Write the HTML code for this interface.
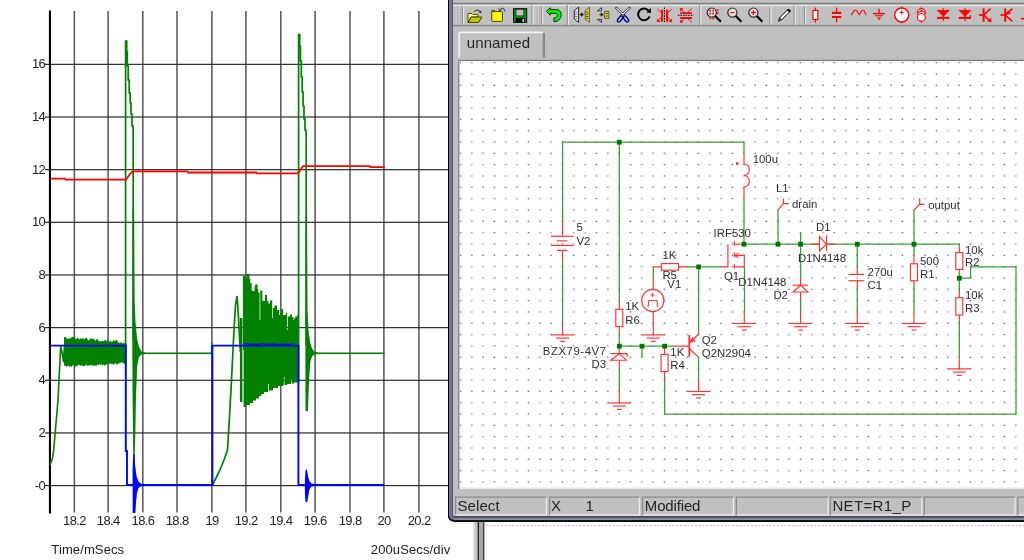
<!DOCTYPE html>
<html><head><meta charset="utf-8"><title>sim</title>
<style>
html,body{margin:0;padding:0;background:#fff;}
body{width:1024px;height:560px;overflow:hidden;font-family:"Liberation Sans",sans-serif;}
svg{display:block;position:absolute;left:0;top:0;will-change:transform;opacity:0.999;}
text{font-family:"Liberation Sans",sans-serif;}
.pl{font-size:13px;fill:#222;letter-spacing:-0.6px;}
.pt{font-size:13px;fill:#222;letter-spacing:0.12px;}
.sc{font-size:11.4px;fill:#2e2e2e;}
.ui{font-size:15px;fill:#262626;letter-spacing:0.18px;}
</style></head><body>
<svg width="1024" height="560" viewBox="0 0 1024 560">
<defs>
<pattern id="dots" x="454.733" y="56.933" width="34" height="34" patternUnits="userSpaceOnUse">
<rect x="5.02" y="5.02" width="1.3" height="1.3" fill="#555"/>
<rect x="5.02" y="16.35" width="1.3" height="1.3" fill="#555"/>
<rect x="5.14" y="27.81" width="1.05" height="1.05" fill="#000"/>
<rect x="16.25" y="4.92" width="1.5" height="1.5" fill="#999"/>
<rect x="16.25" y="16.25" width="1.5" height="1.5" fill="#999"/>
<rect x="16.35" y="27.68" width="1.3" height="1.3" fill="#555"/>
<rect x="27.58" y="4.92" width="1.5" height="1.5" fill="#999"/>
<rect x="27.58" y="16.25" width="1.5" height="1.5" fill="#999"/>
<rect x="27.68" y="27.68" width="1.3" height="1.3" fill="#555"/>
</pattern>
</defs>
<rect x="0" y="0" width="1024" height="560" fill="#fff"/>
<g id="plot">
<rect x="73.60" y="11" width="1.5" height="501.5" fill="#555"/>
<rect x="107.35" y="11" width="1.5" height="501.5" fill="#555"/>
<rect x="142.05" y="11" width="1.5" height="501.5" fill="#555"/>
<rect x="176.25" y="11" width="1.5" height="501.5" fill="#555"/>
<rect x="211.15" y="11" width="1.5" height="501.5" fill="#555"/>
<rect x="245.15" y="11" width="1.5" height="501.5" fill="#555"/>
<rect x="280.05" y="11" width="1.5" height="501.5" fill="#555"/>
<rect x="314.35" y="11" width="1.5" height="501.5" fill="#555"/>
<rect x="349.25" y="11" width="1.5" height="501.5" fill="#555"/>
<rect x="383.15" y="11" width="1.5" height="501.5" fill="#555"/>
<rect x="418.15" y="11" width="1.5" height="501.5" fill="#555"/>
<rect x="45" y="63.75" width="403" height="1.2" fill="#2c2c2c"/>
<rect x="45" y="116.41" width="403" height="1.2" fill="#2c2c2c"/>
<rect x="45" y="169.06" width="403" height="1.2" fill="#2c2c2c"/>
<rect x="45" y="221.72" width="403" height="1.2" fill="#2c2c2c"/>
<rect x="45" y="274.37" width="403" height="1.2" fill="#2c2c2c"/>
<rect x="45" y="327.03" width="403" height="1.2" fill="#2c2c2c"/>
<rect x="45" y="379.69" width="403" height="1.2" fill="#2c2c2c"/>
<rect x="45" y="432.34" width="403" height="1.2" fill="#2c2c2c"/>
<rect x="45" y="485.00" width="403" height="1.2" fill="#2c2c2c"/>
<rect x="48.9" y="10.5" width="2.1" height="503" fill="#000"/>
<text x="45.2" y="68.3" text-anchor="end" class="pl">16</text>
<text x="45.2" y="121.0" text-anchor="end" class="pl">14</text>
<text x="45.2" y="173.6" text-anchor="end" class="pl">12</text>
<text x="45.2" y="226.3" text-anchor="end" class="pl">10</text>
<text x="45.2" y="278.9" text-anchor="end" class="pl">8</text>
<text x="45.2" y="331.6" text-anchor="end" class="pl">6</text>
<text x="45.2" y="384.2" text-anchor="end" class="pl">4</text>
<text x="45.2" y="436.9" text-anchor="end" class="pl">2</text>
<text x="45.2" y="489.5" text-anchor="end" class="pl">-0</text>
<text x="74.5" y="525.1" text-anchor="middle" class="pl">18.2</text>
<text x="108.3" y="525.1" text-anchor="middle" class="pl">18.4</text>
<text x="143.0" y="525.1" text-anchor="middle" class="pl">18.6</text>
<text x="177.2" y="525.1" text-anchor="middle" class="pl">18.8</text>
<text x="212.1" y="525.1" text-anchor="middle" class="pl">19</text>
<text x="246.1" y="525.1" text-anchor="middle" class="pl">19.2</text>
<text x="281.0" y="525.1" text-anchor="middle" class="pl">19.4</text>
<text x="315.3" y="525.1" text-anchor="middle" class="pl">19.6</text>
<text x="350.2" y="525.1" text-anchor="middle" class="pl">19.8</text>
<text x="384.1" y="525.1" text-anchor="middle" class="pl">20</text>
<text x="419.1" y="525.1" text-anchor="middle" class="pl">20.2</text>
<text x="51.3" y="554" class="pt">Time/mSecs</text>
<text x="450.3" y="554" text-anchor="end" class="pt">200uSecs/div</text>
<polyline fill="none" stroke="#008000" stroke-width="1.6" points="50,465 52.5,458 53.5,452 58,400 60.7,346 62,352 63.5,362 64.5,345"/>
<polygon fill="#008000" points="64.0,337.6 64.9,336.7 65.8,337.1 66.7,338.6 67.6,338.8 68.5,338.8 69.4,337.8 70.3,338.7 71.2,337.3 72.1,337.5 73.0,336.4 73.9,336.8 74.8,339.0 75.7,338.6 76.6,339.1 77.5,337.8 78.4,338.1 79.3,339.7 80.2,337.9 81.1,339.0 82.0,338.7 82.9,337.8 83.8,339.5 84.7,338.7 85.6,338.2 86.5,337.5 87.4,339.2 88.3,340.1 89.2,340.5 90.1,338.4 91.0,338.2 91.9,338.8 92.8,339.2 93.7,338.5 94.6,339.7 95.5,341.0 96.4,339.3 97.3,338.8 98.2,340.2 99.1,341.4 100.0,341.0 100.9,341.4 101.8,341.3 102.7,340.6 103.6,341.6 104.5,340.2 105.4,339.5 106.3,341.2 107.2,341.0 108.1,339.3 109.0,341.7 109.9,341.6 110.8,340.6 111.7,342.5 112.6,341.4 113.5,339.8 114.4,341.2 115.3,340.7 116.2,340.1 117.1,340.3 118.0,341.8 118.9,342.8 119.8,342.9 120.7,342.6 121.6,342.3 122.5,343.4 123.4,343.1 124.3,343.4 125.2,341.7 125.2,362.4 124.3,364.3 123.4,363.1 122.5,362.6 121.6,362.4 120.7,362.7 119.8,362.5 118.9,364.0 118.0,363.5 117.1,364.5 116.2,364.5 115.3,362.7 114.4,364.2 113.5,364.5 112.6,364.2 111.7,363.9 110.8,363.5 109.9,364.1 109.0,363.5 108.1,363.4 107.2,365.3 106.3,364.1 105.4,365.4 104.5,365.5 103.6,364.4 102.7,365.5 101.8,364.0 100.9,365.4 100.0,363.7 99.1,364.7 98.2,365.2 97.3,364.3 96.4,366.2 95.5,365.5 94.6,365.4 93.7,366.2 92.8,365.0 91.9,365.4 91.0,364.7 90.1,365.4 89.2,365.7 88.3,365.3 87.4,366.1 86.5,364.5 85.6,365.0 84.7,366.5 83.8,365.8 82.9,366.2 82.0,365.2 81.1,366.0 80.2,365.6 79.3,365.1 78.4,364.8 77.5,365.6 76.6,366.2 75.7,366.9 74.8,365.1 73.9,365.6 73.0,365.0 72.1,366.0 71.2,367.5 70.3,365.6 69.4,367.3 68.5,365.4 67.6,366.3 66.7,366.6 65.8,366.3 64.9,365.5 64.0,365.8"/>
<polyline fill="none" stroke="#008000" stroke-width="1.7" points="125.6,364 125.6,41 126.7,41 126.7,52 127.3,52 127.3,66 128.2,66 128.2,80 129.2,80 129.2,93 130.2,93 130.2,103 131,103 131,114 132,114 132,126 133,126 133.2,131 133.2,340"/>
<polygon fill="#008000" points="132.6,210 134.1,210 134.6,300 135.5,322 137,338 139,347 141.5,351.5 145,352.6 145,354 141.5,354.6 139,357 137.2,366 136,395 135.4,430 134.6,463 133.4,463 132.6,400 132.3,340"/>
<rect x="144" y="352.5" width="68.5" height="1.6" fill="#008000"/>
<polyline fill="none" stroke="#008000" stroke-width="1.5" points="211.5,353 211.8,343.5 212.6,343.5"/>
<polyline fill="none" stroke="#008000" stroke-width="1.7" points="212.5,485 216,478 220,470 224,460 227.5,450 229,425 231,390 233.5,340 235.5,305 237,296 238.2,312 239.4,335 240.4,352"/>
<polygon fill="#008000" points="242.9,276.0 245.0,276.0 245.0,275.5 246.2,275.5 246.2,278.5 246.9,278.5 246.9,274.0 249.5,274.0 249.5,279.0 250.2,279.0 250.2,283.0 251.6,283.0 251.6,290.5 252.2,290.5 252.2,291.0 254.6,291.0 254.6,286.5 255.2,286.5 255.2,284.5 257.6,284.5 257.6,289.0 258.2,289.0 258.2,292.5 259.6,292.5 259.6,320.0 260.3,320.0 260.3,290.5 262.4,290.5 262.4,301.0 265.0,301.0 265.0,295.0 267.0,295.0 267.0,301.0 268.4,301.0 268.4,303.5 270.0,303.5 270.0,300.5 272.2,300.5 272.2,318.0 272.9,318.0 272.9,308.0 274.5,308.0 274.5,305.5 277.0,305.5 277.0,310.0 279.2,310.0 279.2,315.0 280.2,315.0 280.2,313.0 281.0,313.0 281.0,309.0 283.0,309.0 283.0,315.0 286.0,315.0 286.0,313.0 287.2,313.0 287.2,330.0 287.9,330.0 287.9,316.5 290.0,316.5 290.0,314.5 292.0,314.5 292.0,317.0 293.4,317.0 293.4,320.0 294.2,320.0 294.2,318.0 295.4,318.0 295.4,316.5 297.2,316.5 297.2,315.0 298.8,315.0 298.8,382.5 294.0,382.5 294.0,383.5 291.8,383.5 291.8,379.0 291.2,379.0 291.2,384.0 287.0,384.0 287.0,385.0 284.5,385.0 284.5,377.0 283.9,377.0 283.9,385.0 283.0,385.0 283.0,386.0 278.0,386.0 278.0,388.0 273.0,388.0 273.0,390.5 268.9,390.5 268.9,384.0 268.2,384.0 268.2,392.0 264.0,392.0 264.0,394.0 261.4,394.0 261.4,396.0 259.0,396.0 259.0,398.5 256.0,398.5 256.0,400.5 253.0,400.5 253.0,403.0 250.0,403.0 250.0,405.0 246.0,405.0 246.0,407.0 243.6,407.0 243.6,350.0 242.9,350.0"/>
<rect x="239.9" y="318" width="2.5" height="84" fill="#008000"/>
<polyline fill="none" stroke="#008000" stroke-width="1.7" points="298.6,382 298.6,34.5 299.7,34.5 299.7,46 300.4,46 300.4,61 301.3,61 301.3,77 302.2,77 302.2,92 303.1,92 303.1,106 304,106 304,119 305,119 305,130 306,130 306.2,136 306.2,345"/>
<polygon fill="#008000" points="305.6,215 307,215 307.5,310 308.5,330 310,342 312,348.5 314.5,351.8 318,352.6 318,354 314.5,354.4 312,356.5 310.3,362 309.2,378 308.4,398 307.9,411 305.5,411 305.4,360"/>
<rect x="317" y="352.5" width="67.5" height="1.6" fill="#008000"/>
<polyline fill="none" stroke="#ff0000" stroke-width="1.8" points="50,178.6 65,178.6 65.5,179.7 126,179.7 130,174 132.8,171.4 187.5,171.4 188,172.5 256,172.5 256.5,173.3 298,173.3 300,170.5 303,166.2 370,166.2 370.5,167.2 385,167.2"/>
<polyline fill="none" stroke="#0000ff" stroke-width="1.9" points="50,345.6 125.8,345.6 125.8,451 127,451 127,485 212.4,485 212.4,345.6 298.4,345.6 298.4,485 384.5,485"/>
<polygon fill="#0000ff" points="132.6,470 133.2,454 134.4,454 135.2,466 136.5,476 138.5,481.5 141,483.8 144.5,484.3 144.5,485.8 141,486.2 138.5,488 137,493 136,502 135.4,513 132.7,513"/>
<polygon fill="#0000ff" points="304.9,480 305.6,470 307,469.6 308,476 309.4,481 311.5,483.6 315.5,484.3 315.5,485.8 311.5,486.4 309.6,489 308.4,495 307.3,502 305.5,502 304.9,492"/>
<polyline fill="none" stroke="#0000ff" stroke-width="1" points="243,344.3 247,343.6 250,344.4 254,343.8 258,344.4 262,343.7 267,344.4 272,343.8 277,344.4 283,343.9 288,344.4 294,344"/>
<rect x="211.5" y="342" width="1.8" height="4" fill="#008000" opacity="0"/>
</g>
<g id="chrome">
<rect x="473" y="520" width="5" height="40" fill="#c6c6c6"/>
<rect x="473" y="520" width="1.5" height="40" fill="#e4e4e4"/>
<rect x="477.7" y="520" width="1.2" height="40" fill="#000"/>
<rect x="478.9" y="520" width="4.3" height="40" fill="#a8a8a8"/>
<rect x="483" y="520" width="1.4" height="40" fill="#404040"/>
<line x1="486" y1="525.5" x2="1024" y2="525.5" stroke="#bcbcbc" stroke-width="1" stroke-dasharray="2,1.73"/>
<rect x="448" y="-20" width="600" height="541.7" rx="5.5" ry="5.5" fill="#000"/>
<rect x="449" y="-20" width="600" height="539.8" rx="4.5" ry="4.5" fill="#72749c"/>
<rect x="452" y="-20" width="600" height="537" fill="#50505c"/>
<rect x="453" y="-20" width="600" height="536" fill="#c0c0c0"/>
<rect x="454" y="516.1" width="600" height="2.1" fill="#52525c"/>
<rect x="454" y="518.1" width="600" height="2.4" fill="#8486aa"/>
<rect x="454" y="520.3" width="600" height="1.5" fill="#000"/>
<rect x="453" y="2.8" width="600" height="1.6" fill="#808080"/>
<rect x="453" y="4.7" width="600" height="1.4" fill="#e4e4e4"/>
<rect x="453" y="24.8" width="600" height="1.6" fill="#8c8c8c"/>
<rect x="455.9" y="8.0" width="1.3" height="1.1" fill="#dedede"/><rect x="456.7" y="8.9" width="1.3" height="1.0" fill="#a2a2a2"/><rect x="458.7" y="8.6" width="1.3" height="1.1" fill="#dedede"/><rect x="459.5" y="9.5" width="1.3" height="1.0" fill="#a2a2a2"/><rect x="455.9" y="10.6" width="1.3" height="1.1" fill="#dedede"/><rect x="456.7" y="11.5" width="1.3" height="1.0" fill="#a2a2a2"/><rect x="458.7" y="11.2" width="1.3" height="1.1" fill="#dedede"/><rect x="459.5" y="12.1" width="1.3" height="1.0" fill="#a2a2a2"/><rect x="455.9" y="13.1" width="1.3" height="1.1" fill="#dedede"/><rect x="456.7" y="14.0" width="1.3" height="1.0" fill="#a2a2a2"/><rect x="458.7" y="13.7" width="1.3" height="1.1" fill="#dedede"/><rect x="459.5" y="14.6" width="1.3" height="1.0" fill="#a2a2a2"/><rect x="455.9" y="15.6" width="1.3" height="1.1" fill="#dedede"/><rect x="456.7" y="16.5" width="1.3" height="1.0" fill="#a2a2a2"/><rect x="458.7" y="16.2" width="1.3" height="1.1" fill="#dedede"/><rect x="459.5" y="17.1" width="1.3" height="1.0" fill="#a2a2a2"/><rect x="455.9" y="18.2" width="1.3" height="1.1" fill="#dedede"/><rect x="456.7" y="19.1" width="1.3" height="1.0" fill="#a2a2a2"/><rect x="458.7" y="18.8" width="1.3" height="1.1" fill="#dedede"/><rect x="459.5" y="19.7" width="1.3" height="1.0" fill="#a2a2a2"/><rect x="455.9" y="20.8" width="1.3" height="1.1" fill="#dedede"/><rect x="456.7" y="21.6" width="1.3" height="1.0" fill="#a2a2a2"/><rect x="458.7" y="21.4" width="1.3" height="1.1" fill="#dedede"/><rect x="459.5" y="22.2" width="1.3" height="1.0" fill="#a2a2a2"/>
<rect x="462" y="6.5" width="1.1" height="17.5" fill="#8c8c8c"/><rect x="463.1" y="6.5" width="1.1" height="17.5" fill="#ececec"/>
<rect x="531.6" y="5" width="1.1" height="20" fill="#8c8c8c"/><rect x="532.7" y="5" width="1.1" height="20" fill="#ececec"/>
<rect x="535.4" y="8.0" width="1.3" height="1.1" fill="#dedede"/><rect x="536.2" y="8.9" width="1.3" height="1.0" fill="#a2a2a2"/><rect x="538.2" y="8.6" width="1.3" height="1.1" fill="#dedede"/><rect x="539" y="9.5" width="1.3" height="1.0" fill="#a2a2a2"/><rect x="535.4" y="10.6" width="1.3" height="1.1" fill="#dedede"/><rect x="536.2" y="11.5" width="1.3" height="1.0" fill="#a2a2a2"/><rect x="538.2" y="11.2" width="1.3" height="1.1" fill="#dedede"/><rect x="539" y="12.1" width="1.3" height="1.0" fill="#a2a2a2"/><rect x="535.4" y="13.1" width="1.3" height="1.1" fill="#dedede"/><rect x="536.2" y="14.0" width="1.3" height="1.0" fill="#a2a2a2"/><rect x="538.2" y="13.7" width="1.3" height="1.1" fill="#dedede"/><rect x="539" y="14.6" width="1.3" height="1.0" fill="#a2a2a2"/><rect x="535.4" y="15.6" width="1.3" height="1.1" fill="#dedede"/><rect x="536.2" y="16.5" width="1.3" height="1.0" fill="#a2a2a2"/><rect x="538.2" y="16.2" width="1.3" height="1.1" fill="#dedede"/><rect x="539" y="17.1" width="1.3" height="1.0" fill="#a2a2a2"/><rect x="535.4" y="18.2" width="1.3" height="1.1" fill="#dedede"/><rect x="536.2" y="19.1" width="1.3" height="1.0" fill="#a2a2a2"/><rect x="538.2" y="18.8" width="1.3" height="1.1" fill="#dedede"/><rect x="539" y="19.7" width="1.3" height="1.0" fill="#a2a2a2"/><rect x="535.4" y="20.8" width="1.3" height="1.1" fill="#dedede"/><rect x="536.2" y="21.6" width="1.3" height="1.0" fill="#a2a2a2"/><rect x="538.2" y="21.4" width="1.3" height="1.1" fill="#dedede"/><rect x="539" y="22.2" width="1.3" height="1.0" fill="#a2a2a2"/>
<rect x="541" y="6.5" width="1.1" height="17.5" fill="#8c8c8c"/><rect x="542.1" y="6.5" width="1.1" height="17.5" fill="#ececec"/>
<rect x="566.8" y="5" width="1.1" height="20" fill="#8c8c8c"/><rect x="567.9" y="5" width="1.1" height="20" fill="#ececec"/>
<rect x="699.2" y="5" width="1.1" height="20" fill="#8c8c8c"/><rect x="700.3000000000001" y="5" width="1.1" height="20" fill="#ececec"/>
<rect x="769.4" y="6.5" width="1.1" height="17.5" fill="#8c8c8c"/><rect x="770.5" y="6.5" width="1.1" height="17.5" fill="#ececec"/>
<rect x="793.6" y="5" width="1.1" height="20" fill="#8c8c8c"/><rect x="794.7" y="5" width="1.1" height="20" fill="#ececec"/>
<rect x="797.9" y="8.0" width="1.3" height="1.1" fill="#dedede"/><rect x="798.7" y="8.9" width="1.3" height="1.0" fill="#a2a2a2"/><rect x="800.7" y="8.6" width="1.3" height="1.1" fill="#dedede"/><rect x="801.5" y="9.5" width="1.3" height="1.0" fill="#a2a2a2"/><rect x="797.9" y="10.6" width="1.3" height="1.1" fill="#dedede"/><rect x="798.7" y="11.5" width="1.3" height="1.0" fill="#a2a2a2"/><rect x="800.7" y="11.2" width="1.3" height="1.1" fill="#dedede"/><rect x="801.5" y="12.1" width="1.3" height="1.0" fill="#a2a2a2"/><rect x="797.9" y="13.1" width="1.3" height="1.1" fill="#dedede"/><rect x="798.7" y="14.0" width="1.3" height="1.0" fill="#a2a2a2"/><rect x="800.7" y="13.7" width="1.3" height="1.1" fill="#dedede"/><rect x="801.5" y="14.6" width="1.3" height="1.0" fill="#a2a2a2"/><rect x="797.9" y="15.6" width="1.3" height="1.1" fill="#dedede"/><rect x="798.7" y="16.5" width="1.3" height="1.0" fill="#a2a2a2"/><rect x="800.7" y="16.2" width="1.3" height="1.1" fill="#dedede"/><rect x="801.5" y="17.1" width="1.3" height="1.0" fill="#a2a2a2"/><rect x="797.9" y="18.2" width="1.3" height="1.1" fill="#dedede"/><rect x="798.7" y="19.1" width="1.3" height="1.0" fill="#a2a2a2"/><rect x="800.7" y="18.8" width="1.3" height="1.1" fill="#dedede"/><rect x="801.5" y="19.7" width="1.3" height="1.0" fill="#a2a2a2"/><rect x="797.9" y="20.8" width="1.3" height="1.1" fill="#dedede"/><rect x="798.7" y="21.6" width="1.3" height="1.0" fill="#a2a2a2"/><rect x="800.7" y="21.4" width="1.3" height="1.1" fill="#dedede"/><rect x="801.5" y="22.2" width="1.3" height="1.0" fill="#a2a2a2"/>
<rect x="804" y="6.5" width="1.1" height="17.5" fill="#8c8c8c"/><rect x="805.1" y="6.5" width="1.1" height="17.5" fill="#ececec"/>
</g>
<g id="icons">
<g transform="translate(467,9)"><path d="M1,4.5 L5,4.5 L6,5.5 L11,5.5 L11,8 L4,8 L1,13 Z" fill="#ffff80" stroke="#404000" stroke-width="0.9"/><path d="M1,13.4 L4.2,8 L15,8 L11.5,13.4 Z" fill="#c8c800" stroke="#303000" stroke-width="0.9"/><path d="M7,3 C9,0.5 12,0.5 13.5,3" fill="none" stroke="#202020" stroke-width="1"/><path d="M14.5,1.5 L14,4.2 L11.6,3.4 Z" fill="#202020"/></g>
<g transform="translate(491,7)"><path d="M0.8,5.2 L0.8,3.6 L3.6,3.6 L3.6,5.2" fill="#ffff00" stroke="#404000" stroke-width="0.9"/><rect x="0.8" y="4.6" width="10.6" height="9.8" rx="0.8" fill="#ffff00" stroke="#404000" stroke-width="1"/><path d="M8.6,3.4 C9.4,0.6 13.2,0.2 14,4.4" fill="none" stroke="#303030" stroke-width="1"/><path d="M7.6,1.6 L8.6,4 L10.6,2.6" fill="none" stroke="#303030" stroke-width="0.9"/></g>
<rect x="513.5" y="8.7" width="13.2" height="13.7" fill="#009a00" stroke="#001400" stroke-width="1"/><rect x="516" y="9.5" width="7.8" height="6.4" fill="#c2c2c2" stroke="#202020" stroke-width="0.7"/><rect x="515.6" y="17.9" width="9.5" height="4.4" fill="#000"/><rect x="522.4" y="18.9" width="1.5" height="3.1" fill="#e0e0e0"/>
<path d="M546.4,11.3 L550.3,7.7 L550.3,9.5 L556.5,9.5 C561.6,9.7 562.2,15.4 560,18.6 C558.7,20.5 557,21.7 553.9,21.7 L553.9,17.9 C556,17.9 557.3,17 557.3,15.2 C557.3,13.7 556.4,13.4 555,13.4 L550.3,13.4 L550.3,15.3 Z" fill="#00f000" stroke="#002800" stroke-width="0.9" stroke-linejoin="round"/>
<path d="M578.6,7.2 L578.6,22.4 L574.3,19 L574.3,10.6 Z" fill="#f4f4f4" stroke="#101010" stroke-width="0.9"/><path d="M575,12 H577.6 M575,14.2 H577.6 M575,16.4 H577.6 M575.6,18.4 H577.6" stroke="#404040" stroke-width="0.7"/><path d="M589.4,7.2 L589.4,22.4 L585.2,19.4 L585.2,10.6 Z" fill="#e6de20" stroke="#505050" stroke-width="0.9"/><path d="M585.8,12 H588.4 M585.8,14.2 H588.4 M585.8,16.4 H588.4 M586.2,18.4 H588.4" stroke="#202000" stroke-width="0.8"/><path d="M579.8,14.6 H582" stroke="#000" stroke-width="1.3"/><path d="M581.2,12.4 L583.8,14.6 L581.2,16.8 Z" fill="#000"/>
<path d="M597.4,10.9 L601.5,7.6 L601.5,10.9 Z M597.4,19.4 L601.5,22.5 L601.5,19.4 Z" fill="#d8d8d8" stroke="#181818" stroke-width="0.8"/><path d="M599.6,14.6 H601.6" stroke="#000" stroke-width="1.3"/><path d="M601,12.4 L603.6,14.6 L601,16.8 Z" fill="#000"/><rect x="604.7" y="11.3" width="4.2" height="7" fill="#e8e020" stroke="#404040" stroke-width="0.8"/><path d="M605.4,13.4 H608.2 M605.4,16 H608.2" stroke="#202000" stroke-width="0.8"/>
<path d="M616.4,8 L624.6,15.8 M629.4,8 L621.2,15.8" stroke="#101010" stroke-width="2.4" stroke-linecap="round"/><path d="M616.6,8.2 L624.4,15.6 M629.2,8.2 L621.4,15.6" stroke="#fff" stroke-width="1.1" stroke-linecap="round"/><ellipse cx="620" cy="19" rx="1.6" ry="3.6" transform="rotate(38 620 19)" fill="#c8c8c8" stroke="#0000a0" stroke-width="1.3"/><ellipse cx="626" cy="19" rx="1.6" ry="3.6" transform="rotate(-38 626 19)" fill="#c8c8c8" stroke="#0000a0" stroke-width="1.3"/>
<path d="M648.6,10.6 A5.9,5.9 0 1 0 649.6,16.4" fill="none" stroke="#000" stroke-width="1.9"/><path d="M646.2,12.6 L650.9,12.9 L650.9,8 Z" fill="#000"/>
<g stroke="#ff0000" fill="none"><path d="M664.5,7.5 V22.8" stroke="#000" stroke-width="1" stroke-dasharray="1.6,1"/><path d="M662.1,9.8 V21.8 M667.1,9.8 V21.8" stroke-width="2.1"/><path d="M657.4,9.2 L661.2,12.6 M657.4,21.6 L661.2,17.2 M671.7,9.2 L667.9,12.6 M671.7,21.6 L667.9,17.2" stroke-width="0.9"/><path d="M657.4,21.8 L660.2,21.6 L657.6,19 Z M671.7,21.8 L668.9,21.6 L671.5,19 Z" fill="#ff0000" stroke-width="0.5"/></g>
<g stroke="#ff0000" fill="none"><path d="M677.8,15.3 H693.6" stroke="#000" stroke-width="1" stroke-dasharray="1.6,1"/><path d="M680.2,13.1 H692 M680.2,18 H692" stroke-width="1.8"/><path d="M680.4,8.6 L684.4,12.4 M691.8,8.6 L687.8,12.4 M680.4,22.4 L684.4,18.8 M691.8,22.4 L687.8,18.8" stroke-width="0.9"/><path d="M680.2,8.4 L683,8.6 L680.4,11.2 Z M680.2,22.6 L683,22.4 L680.4,19.8 Z" fill="#ff0000" stroke-width="0.5"/></g>
<g transform="translate(706.4,7)"><circle cx="5.4" cy="5.6" r="4.6" fill="#dcdcdc" stroke="#282828" stroke-width="1.2"/><path d="M8.8,9 L14.4,14.8" stroke="#000" stroke-width="2.2"/><path d="M3,3.6 h1.6 M6,3.6 h1.6 M3,6.6 h1.6 M6,6.6 h1.6" stroke="#ff0000" stroke-width="1.6"/><path d="M10.4,3 h1.8 M10.4,6 h1.8 M3,11.6 h1.8 M6,11.6 h1.8" stroke="#ff0000" stroke-width="1.5"/></g>
<g transform="translate(727,7)"><circle cx="5.4" cy="5.6" r="4.6" fill="#dcdcdc" stroke="#282828" stroke-width="1.2"/><path d="M8.8,9 L14.4,14.8" stroke="#000" stroke-width="2.2"/><path d="M3.2,5.6 h4.4" stroke="#ff0000" stroke-width="1.1"/></g>
<g transform="translate(748,7)"><circle cx="5.4" cy="5.6" r="4.6" fill="#dcdcdc" stroke="#282828" stroke-width="1.2"/><path d="M8.8,9 L14.4,14.8" stroke="#000" stroke-width="2.2"/><path d="M3,5.6 h4.8 M5.4,3.2 v4.8" stroke="#ff0000" stroke-width="1.2"/></g>
<path d="M788.4,9 L790.4,11 L781.4,20 L779.4,18 Z" fill="#fff" stroke="#000" stroke-width="1"/><path d="M779.4,18 L781.4,20 L778.2,21.4 Z" fill="#707070" stroke="#000" stroke-width="0.6"/><path d="M788.4,9 L790.4,11 L789.4,12 L787.4,10 Z" fill="#000" stroke="#000" stroke-width="0.8"/>
<g stroke="#ff0000" fill="none">
<path d="M815.4,7.6 V22.4" stroke-width="1.2"/><rect x="813" y="10.4" width="4.8" height="9.2" fill="#fff" stroke-width="1.2"/>
<path d="M836.6,7.6 V12 M836.6,18 V22.4" stroke-width="1.3"/><path d="M832,12.9 H841.2 M832,17 H841.2" stroke-width="2.2"/>
<path d="M851,15 C852.5,15 853,10 855.4,10 C858,10 858,14.6 859.4,14.6 C860.6,14.6 860.6,10 863,10 C865,10 865.4,15 866.4,15" stroke-width="1.2"/>
<path d="M879,8.8 V13.5" stroke-width="1.3"/><path d="M873,13.6 H885" stroke-width="1.3"/><path d="M875,15.7 H883 M877,17.7 H881 M878.2,19.4 H879.8" stroke-width="1.1"/>
<path d="M901.7,6.8 V23" stroke-width="1.6"/><circle cx="901.7" cy="15" r="7" fill="#fff" stroke-width="1.5"/><path d="M899.6,12.4 H903.8 M901.7,10.4 V14.4" stroke-width="1"/>
<path d="M921.4,7.4 V22.6" stroke-width="1.3"/><circle cx="921.4" cy="12.6" r="3.9" fill="#fff" stroke-width="1.2"/><circle cx="921.4" cy="17.4" r="3.9" fill="#fff" stroke-width="1.2"/><path d="M917.8,13.4 A3.9,3.9 0 0 1 925,13.4" stroke-width="1.1"/><path d="M920,11.6 L921.4,10 L922.8,11.6 Z" fill="#ff0000" stroke-width="0.6"/>
<path d="M943.2,8.2 V21" stroke-width="1.1"/><path d="M937.2,10.3 H949.4 L943.3,16.6 Z" fill="#ff0000" stroke-width="0.6"/><path d="M937,17.9 H949.4" stroke-width="2"/>
<path d="M965,8.2 V21" stroke-width="1.1"/><path d="M959,10.3 H971 L965,16.6 Z" fill="#ff0000" stroke-width="0.6"/><path d="M958.8,17.9 H971" stroke-width="2"/><path d="M970.4,15.2 V18.6" stroke-width="1.4"/>
<path d="M978.8,15 H983.4" stroke-width="1.6"/><path d="M983.6,8.4 V21.8" stroke-width="2"/><path d="M984,14.6 L990.6,8.6 M984,15.4 L990.4,21.4" stroke-width="1.5"/><path d="M991.2,21.8 L990.8,18 L987.6,21.4 Z" fill="#ff0000" stroke-width="0.6"/>
<path d="M1000.4,15 H1005" stroke-width="1.6"/><path d="M1005.2,8.4 V21.8" stroke-width="2"/><path d="M1005.6,14.6 L1012.4,8.6 M1005.6,15.4 L1012.4,21.4" stroke-width="1.5"/><path d="M1006,14.6 L1010.6,13.6 L1008.4,10.8 Z" fill="#ff0000" stroke-width="0.5"/>
<path d="M1021,18.7 H1026" stroke-width="1.4"/>
</g>
</g>
<g id="canvas">
<path d="M459.2,57.5 V33.8 Q459.2,32.3 460.8,32.3 H542.6" fill="none" stroke="#f2f2f2" stroke-width="1.8"/>
<path d="M544,33 V57.4" fill="none" stroke="#707070" stroke-width="1.5"/>
<path d="M542.9,34 V57.4" fill="none" stroke="#a4a4a4" stroke-width="0.9"/>
<text x="466.7" y="47.7" class="ui" textLength="63.5" lengthAdjust="spacing">unnamed</text>
<rect x="458.2" y="59.8" width="600" height="429.2" fill="#7c7c7c"/>
<rect x="459.4" y="61" width="600" height="428" fill="#e8e8e8"/>
<rect x="459.8" y="61.6" width="600" height="425.8" fill="#fff"/>
<rect x="459.8" y="61.6" width="564.2" height="425.8" fill="url(#dots)"/>

</g>
<g id="schematic">
<polyline fill="none" stroke="#38a038" stroke-width="1.3" points="562.6,222.0 562.6,142.2 744.0,142.2 744.0,153.2"/>
<polyline fill="none" stroke="#38a038" stroke-width="1.3" points="619.3,142.2 619.3,302.0"/>
<polyline fill="none" stroke="#38a038" stroke-width="1.3" points="562.6,262.0 562.6,323.7"/>
<polyline fill="none" stroke="#38a038" stroke-width="1.3" points="744.0,198.0 744.0,244.2"/>
<polyline fill="none" stroke="#38a038" stroke-width="1.3" points="744.0,244.2 959.3,244.2 959.3,246.0"/>
<polyline fill="none" stroke="#38a038" stroke-width="1.3" points="778.0,244.2 778.0,210.0"/>
<polyline fill="none" stroke="#38a038" stroke-width="1.3" points="800.6,232.2 800.6,278.4"/>
<polyline fill="none" stroke="#38a038" stroke-width="1.3" points="800.6,300.0 800.6,312.0"/>
<polyline fill="none" stroke="#38a038" stroke-width="1.3" points="857.3,244.2 857.3,267.0"/>
<polyline fill="none" stroke="#38a038" stroke-width="1.3" points="857.3,289.0 857.3,312.0"/>
<polyline fill="none" stroke="#38a038" stroke-width="1.3" points="914.0,210.0 914.0,255.6"/>
<polyline fill="none" stroke="#38a038" stroke-width="1.3" points="914.0,284.0 914.0,311.4"/>
<polyline fill="none" stroke="#38a038" stroke-width="1.3" points="959.3,272.0 959.3,290.0"/>
<polyline fill="none" stroke="#38a038" stroke-width="1.3" points="959.3,320.0 959.3,358.6"/>
<polyline fill="none" stroke="#38a038" stroke-width="1.3" points="959.3,278.2 970.6,278.2 970.6,266.9 1016.0,266.9 1016.0,414.2 664.6,414.2 664.6,380.0"/>
<polyline fill="none" stroke="#38a038" stroke-width="1.3" points="687.0,266.9 721.3,266.9"/>
<polyline fill="none" stroke="#38a038" stroke-width="1.3" points="698.6,266.9 698.6,334.3"/>
<polyline fill="none" stroke="#38a038" stroke-width="1.3" points="653.3,266.9 653.3,278.3"/>
<polyline fill="none" stroke="#38a038" stroke-width="1.3" points="744.5,266.9 744.5,312.3"/>
<polyline fill="none" stroke="#38a038" stroke-width="1.3" points="619.3,334.0 619.3,350.8"/>
<polyline fill="none" stroke="#38a038" stroke-width="1.3" points="619.3,346.2 674.7,346.2"/>
<polyline fill="none" stroke="#38a038" stroke-width="1.3" points="642.0,346.2 642.0,357.3"/>
<polyline fill="none" stroke="#38a038" stroke-width="1.3" points="619.3,368.4 619.3,391.3"/>
<polyline fill="none" stroke="#38a038" stroke-width="1.3" points="698.6,357.3 698.6,380.1"/>
<polyline fill="none" stroke="#ff3030" stroke-width="1.15" points="562.6,221.7 562.6,236.3"/>
<polyline fill="none" stroke="#ff3030" stroke-width="1.15" points="551.0,236.3 573.7,236.3"/>
<polyline fill="none" stroke="#ff3030" stroke-width="1.15" points="557.0,240.9 567.5,240.9"/>
<polyline fill="none" stroke="#ff3030" stroke-width="1.15" points="551.0,245.4 573.7,245.4"/>
<polyline fill="none" stroke="#ff3030" stroke-width="1.15" points="557.0,250.4 567.5,250.4"/>
<polyline fill="none" stroke="#ff3030" stroke-width="1.15" points="562.6,250.4 562.6,262.0"/>
<polyline fill="none" stroke="#ff3030" stroke-width="1.15" points="562.6,323.7 562.6,334.9"/>
<polyline fill="none" stroke="#ff3030" stroke-width="1.15" points="551.1,334.9 574.1,334.9"/><polyline fill="none" stroke="#ff3030" stroke-width="1.15" points="556.1,338.1 569.1,338.1"/><polyline fill="none" stroke="#ff3030" stroke-width="1.15" points="560.2,341.4 565.0,341.4"/>
<polyline fill="none" stroke="#ff3030" stroke-width="1.15" points="744.0,153.2 744.0,164.0"/>
<path d="M743.98,164 C750.98,164.5 750.98,175 743.98,175.5 C750.98,176 750.98,186.5 743.98,187" fill="none" stroke="#ff3030" stroke-width="1.15"/>
<polyline fill="none" stroke="#ff3030" stroke-width="1.15" points="744.0,187.0 744.0,198.0"/>
<rect x="736" y="162.3" width="2.6" height="2.6" fill="#ff3030"/>
<polyline fill="none" stroke="#ff3030" stroke-width="1.15" points="721.3,266.9 727.9,266.9 727.9,244.2"/>
<polyline fill="none" stroke="#ff3030" stroke-width="1.15" points="734.3,241.0 734.3,245.8"/>
<polyline fill="none" stroke="#ff3030" stroke-width="1.15" points="734.3,244.2 744.0,244.2"/>
<polyline fill="none" stroke="#ff3030" stroke-width="1.15" points="734.3,252.6 734.3,257.4"/>
<polyline fill="none" stroke="#ff3030" stroke-width="1.15" points="734.3,255.4 744.3,255.4 744.3,266.9 734.3,266.9"/>
<polyline fill="none" stroke="#ff3030" stroke-width="1.15" points="734.3,264.0 734.3,268.5"/>
<path d="M734.6,255.4 L738.6,253 M734.6,255.4 L738.6,257.8" stroke="#ff3030" stroke-width="1.1" fill="none"/>
<polyline fill="none" stroke="#ff3030" stroke-width="1.15" points="744.3,312.3 744.3,323.5"/>
<polyline fill="none" stroke="#ff3030" stroke-width="1.15" points="732.8,323.5 755.8,323.5"/><polyline fill="none" stroke="#ff3030" stroke-width="1.15" points="737.8,326.7 750.8,326.7"/><polyline fill="none" stroke="#ff3030" stroke-width="1.15" points="741.9,330.0 746.7,330.0"/>
<polyline fill="none" stroke="#ff3030" stroke-width="1.15" points="778.0,210.0 783.4,203.6 788.8,203.6"/>
<polyline fill="none" stroke="#ff3030" stroke-width="1.15" points="783.4,203.6 783.4,198.4"/>
<polyline fill="none" stroke="#ff3030" stroke-width="1.15" points="914.0,210.0 919.7,204.4 924.7,204.4"/>
<polyline fill="none" stroke="#ff3030" stroke-width="1.15" points="919.7,204.4 919.7,198.3"/>
<polyline fill="none" stroke="#ff3030" stroke-width="1.15" points="812.0,244.2 834.2,244.2"/>
<path d="M819.5,236.6 L819.5,251 L826.4,244.18 Z" fill="#fff" stroke="#ff3030" stroke-width="1.15"/>
<polyline fill="none" stroke="#ff3030" stroke-width="1.15" points="826.6,235.2 826.6,251.2"/>
<polyline fill="none" stroke="#ff3030" stroke-width="1.15" points="800.6,278.4 800.6,300.0"/>
<path d="M793.05,292 L808.05,292 L800.65,285.3 Z" fill="#fff" stroke="#ff3030" stroke-width="1.15"/>
<polyline fill="none" stroke="#ff3030" stroke-width="1.15" points="792.6,285.2 808.2,285.2"/>
<polyline fill="none" stroke="#ff3030" stroke-width="1.15" points="800.6,312.0 800.6,323.5"/>
<polyline fill="none" stroke="#ff3030" stroke-width="1.15" points="789.1,323.5 812.1,323.5"/><polyline fill="none" stroke="#ff3030" stroke-width="1.15" points="794.1,326.7 807.1,326.7"/><polyline fill="none" stroke="#ff3030" stroke-width="1.15" points="798.2,330.0 803.0,330.0"/>
<polyline fill="none" stroke="#ff3030" stroke-width="1.15" points="857.3,267.0 857.3,274.4"/>
<polyline fill="none" stroke="#ff3030" stroke-width="1.15" points="848.4,274.4 864.2,274.4"/>
<polyline fill="none" stroke="#ff3030" stroke-width="1.15" points="848.4,280.7 864.2,280.7"/>
<polyline fill="none" stroke="#ff3030" stroke-width="1.15" points="857.3,280.7 857.3,289.0"/>
<polyline fill="none" stroke="#ff3030" stroke-width="1.15" points="857.3,312.0 857.3,323.5"/>
<polyline fill="none" stroke="#ff3030" stroke-width="1.15" points="845.8,323.5 868.8,323.5"/><polyline fill="none" stroke="#ff3030" stroke-width="1.15" points="850.8,326.7 863.8,326.7"/><polyline fill="none" stroke="#ff3030" stroke-width="1.15" points="854.9,330.0 859.7,330.0"/>
<polyline fill="none" stroke="#ff3030" stroke-width="1.15" points="914.0,255.6 914.0,284.0"/>
<rect x="910.5" y="263.8" width="7" height="17.0" fill="#fff" stroke="#ff3030" stroke-width="1.15"/>
<polyline fill="none" stroke="#ff3030" stroke-width="1.15" points="914.0,311.4 914.0,323.5"/>
<polyline fill="none" stroke="#ff3030" stroke-width="1.15" points="902.5,323.5 925.5,323.5"/><polyline fill="none" stroke="#ff3030" stroke-width="1.15" points="907.5,326.7 920.5,326.7"/><polyline fill="none" stroke="#ff3030" stroke-width="1.15" points="911.6,330.0 916.4,330.0"/>
<polyline fill="none" stroke="#ff3030" stroke-width="1.15" points="959.3,246.0 959.3,272.0"/>
<rect x="955.8" y="252.6" width="7" height="16.8" fill="#fff" stroke="#ff3030" stroke-width="1.15"/>
<polyline fill="none" stroke="#ff3030" stroke-width="1.15" points="959.3,290.0 959.3,320.0"/>
<rect x="955.8" y="297.7" width="7" height="17.3" fill="#fff" stroke="#ff3030" stroke-width="1.15"/>
<polyline fill="none" stroke="#ff3030" stroke-width="1.15" points="959.3,358.6 959.3,368.9"/>
<polyline fill="none" stroke="#ff3030" stroke-width="1.15" points="947.8,368.9 970.8,368.9"/><polyline fill="none" stroke="#ff3030" stroke-width="1.15" points="952.8,372.1 965.8,372.1"/><polyline fill="none" stroke="#ff3030" stroke-width="1.15" points="956.9,375.4 961.7,375.4"/>
<polyline fill="none" stroke="#ff3030" stroke-width="1.15" points="653.3,266.9 687.0,266.9"/>
<rect x="661.4" y="263.6" width="17.2" height="6.6" fill="#fff" stroke="#ff3030" stroke-width="1.15"/>
<polyline fill="none" stroke="#ff3030" stroke-width="1.15" points="653.3,278.3 653.3,334.9"/>
<circle cx="652.82" cy="300.55" r="11.1" fill="#fff" stroke="#ff3030" stroke-width="1.15"/>
<polyline fill="none" stroke="#ff3030" stroke-width="1.0" points="646.8,306.2 648.6,306.2 648.6,300.6 657.2,300.6 657.2,306.2 658.6,306.2"/>
<polyline fill="none" stroke="#ff3030" stroke-width="1.0" points="650.4,295.0 654.4,295.0"/>
<polyline fill="none" stroke="#ff3030" stroke-width="1.0" points="652.6,293.0 652.6,297.0"/>
<polyline fill="none" stroke="#ff3030" stroke-width="1.15" points="641.8,334.9 664.8,334.9"/><polyline fill="none" stroke="#ff3030" stroke-width="1.15" points="646.8,338.1 659.8,338.1"/><polyline fill="none" stroke="#ff3030" stroke-width="1.15" points="650.9,341.4 655.7,341.4"/>
<polyline fill="none" stroke="#ff3030" stroke-width="1.15" points="619.3,302.0 619.3,334.0"/>
<rect x="615.8" y="309.3" width="7" height="17.2" fill="#fff" stroke="#ff3030" stroke-width="1.15"/>
<polyline fill="none" stroke="#ff3030" stroke-width="1.15" points="619.3,350.8 619.3,353.6"/>
<polyline fill="none" stroke="#ff3030" stroke-width="1.15" points="619.3,360.0 619.3,368.4"/>
<path d="M610.8,360.2 L626.4,360.2 L619.32,353.7 Z" fill="#fff" stroke="#ff3030" stroke-width="1.15"/>
<polyline fill="none" stroke="#ff3030" stroke-width="1.15" points="610.3,353.6 627.2,353.6 627.2,356.8"/>
<polyline fill="none" stroke="#ff3030" stroke-width="1.15" points="619.3,391.3 619.3,402.9"/>
<polyline fill="none" stroke="#ff3030" stroke-width="1.15" points="607.8,402.9 630.8,402.9"/><polyline fill="none" stroke="#ff3030" stroke-width="1.15" points="612.8,406.1 625.8,406.1"/><polyline fill="none" stroke="#ff3030" stroke-width="1.15" points="616.9,409.4 621.7,409.4"/>
<polyline fill="none" stroke="#ff3030" stroke-width="1.15" points="664.6,346.2 664.6,380.0"/>
<rect x="661.1" y="354.4" width="7" height="17.2" fill="#fff" stroke="#ff3030" stroke-width="1.15"/>
<polyline fill="none" stroke="#ff3030" stroke-width="1.15" points="674.7,346.2 689.3,346.2"/>
<polyline fill="none" stroke="#ff3030" stroke-width="1.8" points="689.3,335.0 689.3,357.0"/>
<polyline fill="none" stroke="#ff3030" stroke-width="1.15" points="698.6,334.3 689.6,342.5"/>
<path d="M689.8,342.6 L695.2,341.2 L692.6,337.2 Z" fill="#ff3030" stroke="#ff3030" stroke-width="0.6"/>
<polyline fill="none" stroke="#ff3030" stroke-width="1.15" points="689.6,349.0 698.6,357.3"/>
<polyline fill="none" stroke="#ff3030" stroke-width="1.15" points="698.6,380.1 698.6,391.5"/>
<polyline fill="none" stroke="#ff3030" stroke-width="1.15" points="687.1,391.5 710.1,391.5"/><polyline fill="none" stroke="#ff3030" stroke-width="1.15" points="692.1,394.7 705.1,394.7"/><polyline fill="none" stroke="#ff3030" stroke-width="1.15" points="696.2,398.0 701.0,398.0"/>
<rect x="616.9" y="139.8" width="4.8" height="4.8" fill="#007600"/>
<rect x="741.6" y="241.8" width="4.8" height="4.8" fill="#007600"/>
<rect x="775.6" y="241.8" width="4.8" height="4.8" fill="#007600"/>
<rect x="798.2" y="241.8" width="4.8" height="4.8" fill="#007600"/>
<rect x="854.9" y="241.8" width="4.8" height="4.8" fill="#007600"/>
<rect x="911.6" y="241.8" width="4.8" height="4.8" fill="#007600"/>
<rect x="956.9" y="275.8" width="4.8" height="4.8" fill="#007600"/>
<rect x="696.2" y="264.5" width="4.8" height="4.8" fill="#007600"/>
<rect x="616.9" y="343.8" width="4.8" height="4.8" fill="#007600"/>
<rect x="639.6" y="343.8" width="4.8" height="4.8" fill="#007600"/>
<rect x="662.2" y="343.8" width="4.8" height="4.8" fill="#007600"/>
<text x="576.5" y="231.0" class="sc" text-anchor="start">5</text>
<text x="576.5" y="244.6" class="sc" text-anchor="start">V2</text>
<text x="752.7" y="163.0" class="sc" text-anchor="start">100u</text>
<text x="776.0" y="191.6" class="sc" text-anchor="start">L1</text>
<text x="792.0" y="208.0" class="sc" text-anchor="start">drain</text>
<text x="928.2" y="208.5" class="sc" text-anchor="start">output</text>
<text x="713.6" y="237.0" class="sc" text-anchor="start">IRF530</text>
<text x="724.0" y="279.6" class="sc" text-anchor="start">Q1</text>
<text x="738.3" y="286.4" class="sc" text-anchor="start">D1N4148</text>
<text x="816.0" y="230.8" class="sc" text-anchor="start">D1</text>
<text x="797.9" y="261.7" class="sc" text-anchor="start">D1N4148</text>
<text x="773.4" y="299.0" class="sc" text-anchor="start">D2</text>
<text x="867.6" y="276.4" class="sc" text-anchor="start">270u</text>
<text x="867.6" y="288.8" class="sc" text-anchor="start">C1</text>
<text x="920.0" y="264.8" class="sc" text-anchor="start">500</text>
<text x="920.0" y="277.6" class="sc" text-anchor="start">R1</text>
<text x="965.0" y="253.6" class="sc" text-anchor="start">10k</text>
<text x="965.0" y="266.4" class="sc" text-anchor="start">R2</text>
<text x="965.0" y="299.4" class="sc" text-anchor="start">10k</text>
<text x="965.0" y="312.3" class="sc" text-anchor="start">R3</text>
<text x="662.4" y="258.7" class="sc" text-anchor="start">1K</text>
<text x="662.4" y="279.3" class="sc" text-anchor="start">R5</text>
<text x="667.3" y="287.5" class="sc" text-anchor="start">V1</text>
<text x="625.2" y="310.4" class="sc" text-anchor="start">1K</text>
<text x="625.2" y="323.7" class="sc" text-anchor="start">R6</text>
<text x="542.8" y="354.5" class="sc" text-anchor="start" textLength="63.2" lengthAdjust="spacing">BZX79-4V7</text>
<text x="591.5" y="367.8" class="sc" text-anchor="start">D3</text>
<text x="670.3" y="355.9" class="sc" text-anchor="start">1K</text>
<text x="670.3" y="368.8" class="sc" text-anchor="start">R4</text>
<text x="701.7" y="344.4" class="sc" text-anchor="start">Q2</text>
<text x="701.7" y="357.3" class="sc" text-anchor="start" textLength="49.2" lengthAdjust="spacing">Q2N2904</text>
</g>
<g id="status">
<path d="M455.6,514.8 V497.2 H546.4" fill="none" stroke="#8a8a8a" stroke-width="1.2"/><path d="M546.4,497.8 V514.8 H456.20000000000005" fill="none" stroke="#ececec" stroke-width="1.2"/>
<path d="M549.6,514.8 V497.2 H639.4" fill="none" stroke="#8a8a8a" stroke-width="1.2"/><path d="M639.4,497.8 V514.8 H550.2" fill="none" stroke="#ececec" stroke-width="1.2"/>
<path d="M642.6,514.8 V497.2 H733.4" fill="none" stroke="#8a8a8a" stroke-width="1.2"/><path d="M733.4,497.8 V514.8 H643.2" fill="none" stroke="#ececec" stroke-width="1.2"/>
<path d="M736.4,514.8 V497.2 H828" fill="none" stroke="#8a8a8a" stroke-width="1.2"/><path d="M828,497.8 V514.8 H737.0" fill="none" stroke="#ececec" stroke-width="1.2"/>
<path d="M830.4,514.8 V497.2 H921.8" fill="none" stroke="#8a8a8a" stroke-width="1.2"/><path d="M921.8,497.8 V514.8 H831.0" fill="none" stroke="#ececec" stroke-width="1.2"/>
<path d="M924.2,514.8 V497.2 H1015" fill="none" stroke="#8a8a8a" stroke-width="1.2"/><path d="M1015,497.8 V514.8 H924.8000000000001" fill="none" stroke="#ececec" stroke-width="1.2"/>
<path d="M1017.8,514.8 V497.2 H1060" fill="none" stroke="#8a8a8a" stroke-width="1.2"/><path d="M1060,497.8 V514.8 H1018.4" fill="none" stroke="#ececec" stroke-width="1.2"/>
<text x="457.4" y="510.8" class="ui" textLength="42.4" lengthAdjust="spacing">Select</text>
<text x="551" y="510.8" class="ui">X</text>
<text x="585.6" y="510.8" class="ui">1</text>
<text x="644.8" y="510.8" class="ui" textLength="55.8" lengthAdjust="spacing">Modified</text>
<text x="832.4" y="510.8" class="ui" textLength="79" lengthAdjust="spacing">NET=R1_P</text>
</g>
</svg>
</body></html>
